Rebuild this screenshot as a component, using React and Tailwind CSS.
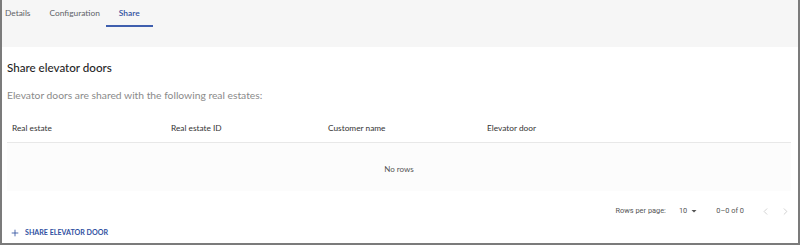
import { ChevronLeft, ChevronRight, Plus } from 'lucide-react';

export default function App() {
  const columns = ['Real estate', 'Real estate ID', 'Customer name', 'Elevator door'];

  return (
    <div className="w-[800px] h-[245px] flex flex-col bg-white border-x-2 border-b-2 border-[#7b7b7b] font-['Lato',sans-serif] overflow-hidden">
      {/* Tabs */}
      <div className="h-[47px] shrink-0 bg-[#f6f6f6] flex items-start pl-[3px] gap-[19px] text-[8.4px] text-[#5f6368]">
        <div className="h-[27px] flex items-center">Details</div>
        <div className="h-[27px] flex items-center">Configuration</div>
        <div className="relative h-[27px] flex items-center text-[#2f4f9f] font-semibold">
          Share
          <span className="absolute -left-[13px] -right-[13px] bottom-0 h-[2px] bg-[#3f5fae]" />
        </div>
      </div>

      {/* Content */}
      <div className="flex-1 flex flex-col px-[5px]">
        <h2 className="pt-[13px] h-[28px] text-[11.6px] leading-[15px] font-medium text-[#1f1f1f]">Share elevator doors</h2>
        <p className="mt-[13px] text-[10.3px] leading-[14px] text-[#8a8a8a]">
          Elevator doors are shared with the following real estates:
        </p>

        {/* Table */}
        <div className="mt-[13px] mr-[2px]">
          <div className="grid grid-cols-[159px_157px_159px_1fr] h-[28px] items-center border-b border-[#e8e8e8] text-[8.3px] text-[#333]">
            {columns.map(c => (
              <div key={c} className="pl-[5px]">{c}</div>
            ))}
          </div>
          <div className="h-[48px] bg-[#fcfcfc] flex items-center justify-center pt-[4px] text-[8px] text-[#555]">
            No rows
          </div>
          <div className="h-[36px] pt-[4px] flex items-center justify-end text-[7.4px] text-[#555] font-['Roboto',sans-serif]">
            <span>Rows per page:</span>
            <span className="ml-[13px]">10</span>
            <svg width="10" height="10" viewBox="0 0 10 10" className="ml-[2px]"><path d="M2.5 4 L5 6.5 L7.5 4 Z" fill="#555" /></svg>
            <span className="ml-[17px]">0–0 of 0</span>
            <ChevronLeft className="ml-[16px] w-[11px] h-[11px] text-[#bdbdbd]" strokeWidth={1.5} />
            <ChevronRight className="ml-[9px] w-[11px] h-[11px] text-[#bdbdbd]" strokeWidth={1.5} />
          </div>
        </div>

        <button className="flex items-center gap-[5px] text-[7.1px] font-bold text-[#2f4f9f] pl-[3px] h-[12px]">
          <Plus className="w-[10px] h-[10px]" strokeWidth={2} />
          SHARE ELEVATOR DOOR
        </button>
      </div>
    </div>
  );
}
